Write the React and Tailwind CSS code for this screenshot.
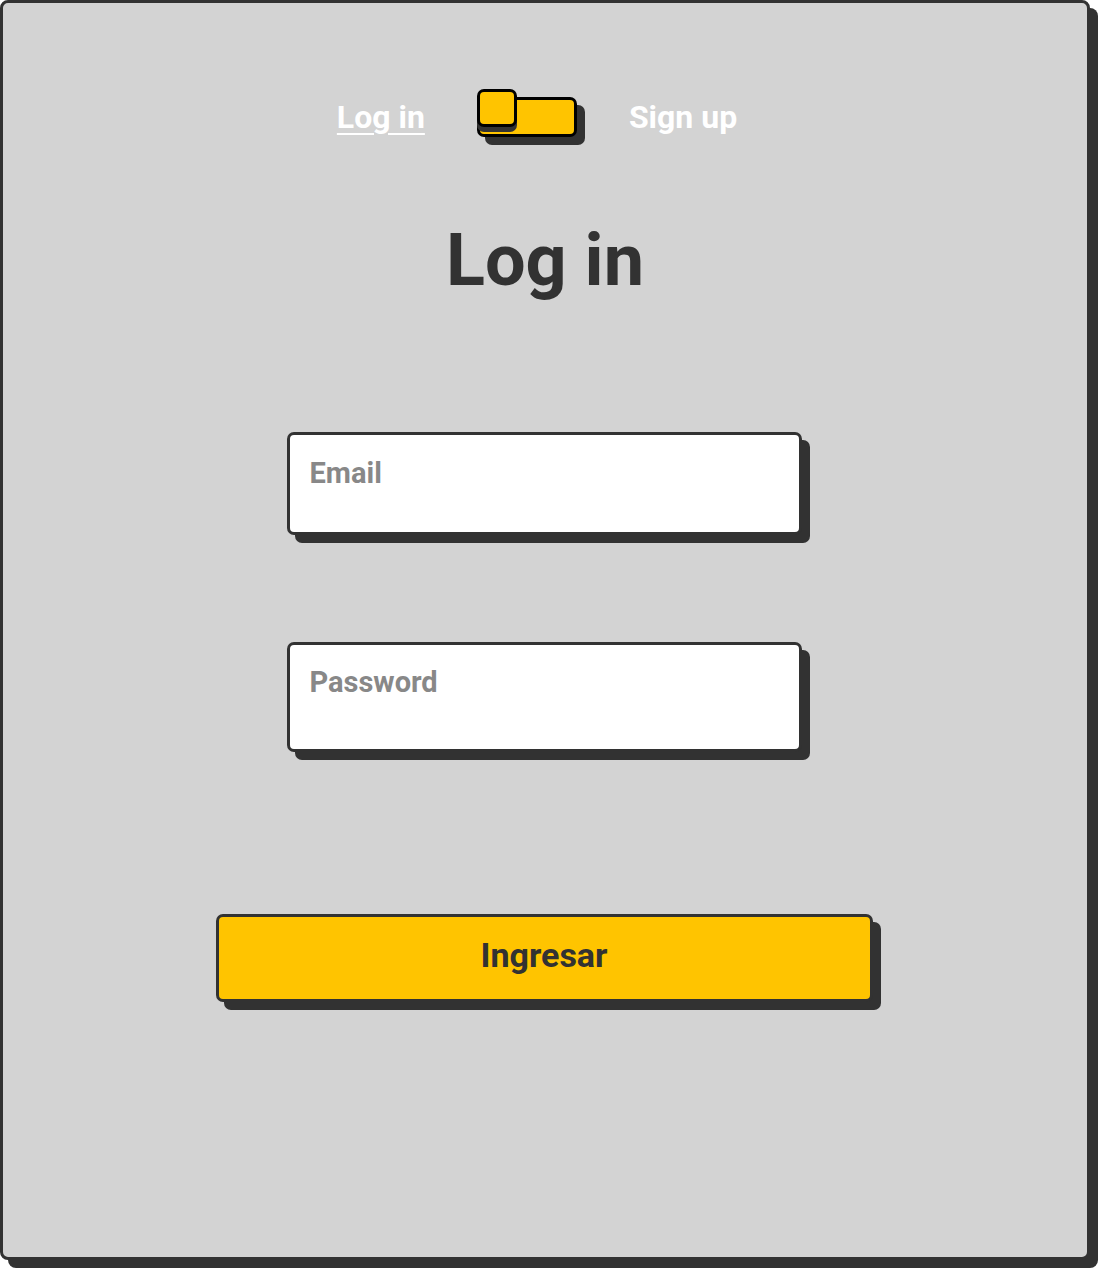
import React, { useState } from "react";

const App = () => {
  const [isLogin, setIsLogin] = useState(true);

  return (
    <div className="w-[1098px] h-[1268px] bg-white" style={{ fontFamily: "Roboto, 'Liberation Sans', sans-serif" }}>
      <div className="w-[1090px] h-[1260px] rounded-lg border-[3px] border-[#323232] bg-[#d3d3d3] shadow-[8px_8px_0_#323232] flex flex-col items-center">
        {/* Switch row */}
        <div className="mt-[86px] mr-[16px] flex items-center gap-[52px] h-[56px]">
          <span className="text-[32px] font-bold text-white underline underline-offset-[5px] decoration-2">Log in</span>
          <button
            onClick={() => setIsLogin(!isLogin)}
            className="relative w-[100px] h-[40px]"
          >
            <span className="absolute left-0 top-0 w-[100px] h-[40px] rounded-[7px] border-[3px] border-black bg-[#ffc400] shadow-[8px_8px_0_#323232]" />
            <span className="absolute left-0 top-[-8px] w-[40px] h-[38px] rounded-[7px] border-[3px] border-black bg-[#ffc400] shadow-[0_5px_0_#323232]" />
          </button>
          <span className="text-[32px] font-bold text-white">Sign up</span>
        </div>

        {/* Title */}
        <h1 className="mt-[80px] text-[72px] leading-none font-bold text-[#323232]">Log in</h1>

        {/* Form */}
        <input
          type="email"
          placeholder="Email"
          className="mt-[135px] mr-[2px] w-[515px] h-[103px] rounded-[7px] border-[3px] border-[#323232] bg-white shadow-[8px_8px_0_#323232] px-[20px] pt-0 pb-[22px] text-[29px] font-bold text-[#323232] placeholder:text-[#888888] outline-none"
        />
        <input
          type="password"
          placeholder="Password"
          className="mt-[107px] mr-[2px] w-[515px] h-[110px] rounded-[7px] border-[3px] border-[#323232] bg-white shadow-[8px_8px_0_#323232] px-[20px] pt-0 pb-[30px] text-[29px] font-bold text-[#323232] placeholder:text-[#888888] outline-none"
        />

        <button className="mt-[162px] mr-[2px] w-[657px] h-[88px] rounded-[7px] border-[3px] border-[#323232] bg-[#ffc400] shadow-[8px_8px_0_#323232] pb-[6px] text-[34px] font-bold text-[#323232]">
          Ingresar
        </button>
      </div>
    </div>
  );
};

export default App;
